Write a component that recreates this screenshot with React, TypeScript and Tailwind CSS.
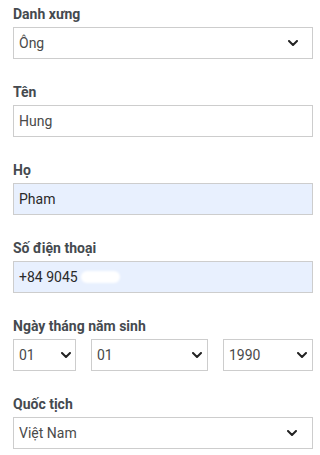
import React from 'react';

const font = { fontFamily: 'Roboto, "Noto Sans", sans-serif' };

function Chevron() {
  return (
    <svg width="10" height="6" viewBox="0 0 10 6" fill="none" className="shrink-0">
      <polyline points="1,1 5,5 9,1" stroke="#222" strokeWidth="2" strokeLinecap="round" strokeLinejoin="round" />
    </svg>
  );
}

function Label({ children }: { children: React.ReactNode }) {
  return <div className="h-5 leading-5 text-[14px] font-bold text-[#454a4f]">{children}</div>;
}

function SelectBox({ value, className, pr }: { value: string; className: string; pr: string }) {
  return (
    <div className={`flex h-8 items-center justify-between border border-[#cdcdcd] bg-white pl-[5px] ${pr} ${className}`}>
      <span className="text-[14px] text-[#4a4a4a]">{value}</span>
      <Chevron />
    </div>
  );
}

function TextBox({ children, filled }: { children: React.ReactNode; filled?: boolean }) {
  return (
    <div
      className={`flex h-8 w-[300px] items-center border border-[#cdcdcd] pl-[5px] text-[14px] ${
        filled ? 'bg-[#e8f0fe] text-[#2a2a2a]' : 'bg-white text-[#4a4a4a]'
      }`}
    >
      {children}
    </div>
  );
}

export default function App() {
  return (
    <div className="h-[455px] w-[320px] overflow-hidden bg-white pl-[13px] pt-[4px]" style={font}>
      <div className="flex flex-col gap-[23px]">
        <div>
          <Label>Danh xưng</Label>
          <div className="mt-[3px]">
            <SelectBox value="Ông" className="w-[300px]" pr="pr-[14px]" />
          </div>
        </div>

        <div>
          <Label>Tên</Label>
          <div className="mt-[3px]">
            <TextBox>Hung</TextBox>
          </div>
        </div>

        <div>
          <Label>Họ</Label>
          <div className="mt-[3px]">
            <TextBox filled>Pham</TextBox>
          </div>
        </div>

        <div>
          <Label>Số điện thoại</Label>
          <div className="mt-[3px]">
            <TextBox filled>
              <span>+84 9045</span>
              <span className="ml-[3px] inline-block h-[12px] w-[39px] rounded-full bg-white blur-[1px]" />
            </TextBox>
          </div>
        </div>

        <div>
          <Label>Ngày tháng năm sinh</Label>
          <div className="mt-[3px] flex gap-[15px]">
            <SelectBox value="01" className="w-[63px]" pr="pr-[4px]" />
            <SelectBox value="01" className="w-[117px]" pr="pr-[5px]" />
            <SelectBox value="1990" className="w-[90px]" pr="pr-[5px]" />
          </div>
        </div>

        <div>
          <Label>Quốc tịch</Label>
          <div className="mt-[3px]">
            <SelectBox value="Việt Nam" className="w-[300px]" pr="pr-[15px]" />
          </div>
        </div>
      </div>
    </div>
  );
}
